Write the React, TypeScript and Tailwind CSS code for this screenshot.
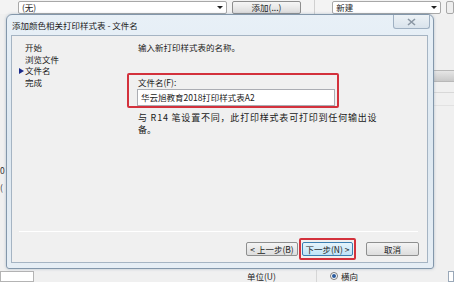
import React from 'react';

const font = { fontFamily: '"Noto Sans CJK SC", "Liberation Sans", sans-serif' };

const BackWindow: React.FC = () => (
  <div className="absolute inset-0 flex flex-col bg-[#f0f0f0]">
    {/* top row of the window behind */}
    <div className="h-[14px] flex items-end gap-[5px] pl-[18px] bg-[#f3f3f3]">
      <div className="relative w-[211px] h-[13px] border border-[#a8a8a8] bg-white rounded-[2px] text-[8.5px] leading-[11px] pl-[3px] text-[#222]">
        (无)
        <span className="absolute right-[3px] top-[4px] w-0 h-0 border-l-[3px] border-r-[3px] border-t-[3px] border-l-transparent border-r-transparent border-t-[#222]" />
      </div>
      <div className="w-[70px] h-[13px] border border-[#8e8e8e] rounded-[2px] bg-gradient-to-b from-[#f6f6f6] to-[#dcdcdc] text-[8.5px] leading-[11px] text-center text-[#222]">
        添加(...)
      </div>
      <div className="w-px h-[14px] bg-[#d0d0d0] ml-[8px]" />
      <div className="relative ml-[12px] w-[110px] h-[13px] border border-[#a8a8a8] bg-white rounded-[2px] text-[8.5px] leading-[11px] pl-[3px] text-[#222]">
        新建
        <span className="absolute right-[3px] top-[4px] w-0 h-0 border-l-[3px] border-r-[3px] border-t-[3px] border-l-transparent border-r-transparent border-t-[#222]" />
      </div>
      <div className="w-[8px] h-[13px] border border-[#a8a8a8] rounded-[2px] bg-[#eee]" />
    </div>
    <div className="flex-1 flex">
      <div className="w-[8px] flex flex-col text-[8.5px] text-[#333] pt-[150px] gap-[4px]">
        <span>0</span>
        <span>(</span>
      </div>
      <div className="flex-1" />
      <div className="w-[20px] flex flex-col pt-[56px]">
        <div className="h-[12px] bg-gradient-to-b from-[#e6e6e6] to-[#c9c9c9] border-y border-[#b8b8b8]" />
        <div className="h-px bg-[#d8d8d8] mt-[10px]" />
        <div className="h-px bg-[#e2e2e2] mt-[12px]" />
      </div>
    </div>
    {/* bottom row of the window behind */}
    <div className="h-[12px] flex items-center text-[8.5px] text-[#222]">
      <div className="w-[34px] h-[11px] border border-[#b4b4b4] bg-white" />
      <span className="ml-[213px]">单位(U)</span>
      <div className="w-px h-[12px] bg-[#d6d6d6] ml-[40px]" />
      <span className="ml-[13px] w-[8px] h-[8px] rounded-full border border-[#7a7a7a] bg-white flex items-center justify-center">
        <span className="w-[4px] h-[4px] rounded-full bg-[#2b5b9c]" />
      </span>
      <span className="ml-[3px]">横向</span>
      <div className="ml-auto w-[6px] h-[11px] border border-[#9aa8b8] bg-white" />
    </div>
  </div>
);

const Btn: React.FC<{ children: React.ReactNode; active?: boolean; className?: string }> = ({ children, active, className }) => (
  <div
    className={
      'h-[14px] rounded-[2px] border text-[8.5px] leading-[12px] text-center text-[#1a1a1a] ' +
      (active
        ? 'border-[#3c7fb1] bg-gradient-to-b from-[#e5f4fc] to-[#bfe3f7]'
        : 'border-[#8e8f8f] bg-gradient-to-b from-[#f4f4f4] to-[#dddddd]') +
      ' ' +
      (className ?? '')
    }
  >
    {children}
  </div>
);

export default function App() {
  return (
    <div className="relative w-[454px] h-[282px] overflow-hidden" style={font}>
      <BackWindow />

      {/* dialog window */}
      <div className="absolute left-[6px] top-[14px] w-[428px] h-[255px] rounded-t-[6px] rounded-b-[3px] border border-[#8397ab] bg-gradient-to-b from-[#e8f0f7] via-[#dde8f1] to-[#e6eef5] shadow-[0_0_3px_rgba(90,120,150,0.4)] flex flex-col">
        {/* title bar */}
        <div className="relative h-[20px] flex items-center pl-[5px]">
          <span className="text-[8.5px] text-[#1a1a1a]">添加颜色相关打印样式表 - 文件名</span>
          <div className="absolute right-[3px] top-0 w-[37px] h-[14px] rounded-b-[3px] border border-t-0 border-[#9fb0c2] bg-gradient-to-b from-[#edf2f6] to-[#d9e3ec] flex items-center justify-center">
            <svg width="9" height="8" viewBox="0 0 9 8">
              <path d="M1 1 L8 7 M8 1 L1 7" stroke="#8a96a3" strokeWidth="1.6" fill="none" />
            </svg>
          </div>
        </div>

        {/* client area */}
        <div className="ml-[4px] mr-[5px] mb-[5px] flex-1 border border-[#a5b4c3] bg-[#f0f0f0] flex flex-col">
          <div className="flex-1 flex pt-[6px] text-[8.5px] text-[#1a1a1a]">
            {/* step list */}
            <div className="w-[115px] pl-[7px] flex flex-col leading-[11.5px]">
              <span className="pl-[6px]">开始</span>
              <span className="pl-[6px]">浏览文件</span>
              <span className="relative pl-[6px]">
                <span className="absolute left-0 top-[3px] w-0 h-0 border-y-[3.5px] border-l-[5px] border-y-transparent border-l-[#1b2b8a]" />
                文件名
              </span>
              <span className="pl-[6px]">完成</span>
            </div>

            {/* page body */}
            <div className="flex flex-col">
              <span className="pl-[11px] leading-[11px]">输入新打印样式表的名称。</span>
              <div className="mt-[20px] w-[212px] h-[35px] border-2 border-[#d3313c] rounded-[2px] pl-[8px] pr-[2px] pt-[1px] flex flex-col">
                <span className="pl-[1px] leading-[12px]">文件名(F):</span>
                <div className="mt-[1px] w-[198px] h-[17px] border border-[#abadb3] bg-white pl-[3px] leading-[15px]">
                  华云旭教育2018打印样式表A2
                </div>
              </div>
              <div className="pl-[11px] mt-[4px] leading-[12px] text-[9px] whitespace-nowrap">
                <div className="tracking-[0.8px]">与 R14 笔设置不同，此打印样式表可打印到任何输出设</div>
                <div>备。</div>
              </div>
            </div>
          </div>

          {/* separator */}
          <div className="ml-[7px] mr-[9px] h-px bg-[#c6c6c6] border-b border-white" />

          {/* buttons */}
          <div className="h-[30px] flex items-center justify-end pr-[8px] pt-[3px] gap-[10px]">
            <div className="flex items-center">
              <Btn className="w-[52px]">&lt; 上一步(B)</Btn>
              <div className="ml-[1px] border-2 border-[#d3313c] rounded-[2px] px-[1px] py-[2px]">
                <Btn active className="w-[51px]">下一步(N) &gt;</Btn>
              </div>
            </div>
            <Btn className="w-[53px]">取消</Btn>
          </div>
        </div>
      </div>
    </div>
  );
}
